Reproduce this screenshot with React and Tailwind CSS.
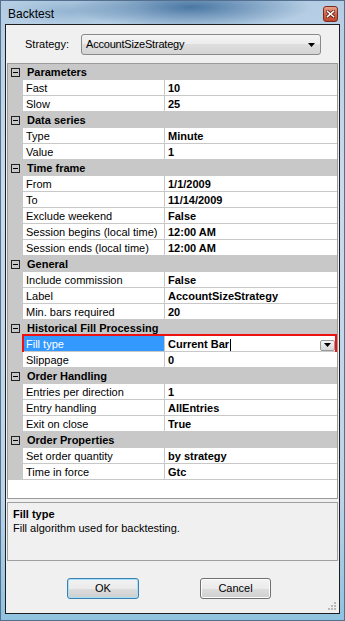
import React from "react";

const sections = [
  { title: "Parameters", rows: [["Fast", "10"], ["Slow", "25"]] },
  { title: "Data series", rows: [["Type", "Minute"], ["Value", "1"]] },
  {
    title: "Time frame",
    rows: [
      ["From", "1/1/2009"],
      ["To", "11/14/2009"],
      ["Exclude weekend", "False"],
      ["Session begins (local time)", "12:00 AM"],
      ["Session ends (local time)", "12:00 AM"],
    ],
  },
  {
    title: "General",
    rows: [
      ["Include commission", "False"],
      ["Label", "AccountSizeStrategy"],
      ["Min. bars required", "20"],
    ],
  },
  {
    title: "Historical Fill Processing",
    rows: [
      ["Fill type", "Current Bar", true],
      ["Slippage", "0"],
    ],
  },
  {
    title: "Order Handling",
    rows: [
      ["Entries per direction", "1"],
      ["Entry handling", "AllEntries"],
      ["Exit on close", "True"],
    ],
  },
  {
    title: "Order Properties",
    rows: [
      ["Set order quantity", "by strategy"],
      ["Time in force", "Gtc"],
    ],
  },
];

function Category({ title }) {
  return (
    <div className="h-[16px] flex items-center bg-[#c8c8c8] pl-[3px] pt-[1px]">
      <div className="w-[9px] h-[9px] border border-[#222] flex items-center justify-center">
        <div className="w-[5px] h-[1px] bg-black" />
      </div>
      <span className="ml-[7px] font-bold leading-none">{title}</span>
    </div>
  );
}

function Row({ name, value, selected }) {
  return (
    <div className="relative h-[16px] flex">
      <div className="w-[15px] bg-[#c8c8c8]" />
      <div
        className={
          selected
            ? "w-[141px] h-[15px] flex items-center pl-[3px] pt-[2px] bg-[#3399ff] text-white"
            : "w-[141px] h-[15px] flex items-center pl-[3px] pt-[2px] bg-white"
        }
      >
        <span className="whitespace-nowrap leading-none">{name}</span>
      </div>
      <div className="w-[1px] bg-[#c8c8c8]" />
      <div className="flex-1 h-[15px] flex items-center pl-[3px] pt-[2px] bg-white">
        <span className="font-bold whitespace-nowrap leading-none">{value}</span>
        {selected && <div className="w-[1px] h-[12px] bg-black ml-[1px]" />}
        {selected && (
          <div className="ml-auto mr-[2px] mt-[1px] w-[15px] h-[11px] border border-[#9a9a9a] rounded-[2px] bg-gradient-to-b from-[#f6f6f6] to-[#d6d6d6] flex items-center justify-center">
            <svg width="7" height="4" viewBox="0 0 7 4">
              <path d="M0 0h7L3.5 4z" fill="#000" />
            </svg>
          </div>
        )}
      </div>
      <div className="absolute left-0 right-0 bottom-0 h-[1px] bg-[#c8c8c8]" />
      {selected && (
        <div className="absolute left-[14px] right-0 -top-[2px] -bottom-[2px] border-2 border-[#ee1111]" />
      )}
    </div>
  );
}

export default function App() {
  return (
    <div className="w-[345px] h-[621px] flex flex-col overflow-hidden border border-[#55708f] font-['Liberation_Sans',Arial,sans-serif] text-[11px] text-black bg-[radial-gradient(ellipse_120px_22px_at_190px_6px,#4a77a3,transparent),radial-gradient(ellipse_70px_14px_at_70px_10px,#94b4d1,transparent),linear-gradient(180deg,#b4cde4,#c8dbec_30%,#bcd3e8_80%,#8fc3df)]">
      {/* title bar */}
      <div className="h-[23px] flex items-center justify-between pl-[7px] pr-[6px]">
        <span className="text-[12px] mt-[2px]">Backtest</span>
        <div className="w-[15px] h-[16px] mt-[3px] rounded-[3px] border border-[#7c2a1c] bg-gradient-to-b from-[#eaa28c] via-[#d2634a] to-[#c0462c] flex items-center justify-center">
          <svg width="9" height="8" viewBox="0 0 9 8">
            <path d="M1.5 1.5l6 5M7.5 1.5l-6 5" stroke="#5a1f14" strokeWidth="3.2" strokeLinecap="square" />
            <path d="M1.5 1.5l6 5M7.5 1.5l-6 5" stroke="#fff" strokeWidth="1.6" strokeLinecap="square" />
          </svg>
        </div>
      </div>

      {/* client area */}
      <div className="flex-1 mx-[4px] mb-[6px] border border-[#1e1e1e] bg-[#f0f0f0] flex flex-col relative">
        <div className="flex items-center mt-[9px] h-[21px]">
          <span className="ml-[19px] w-[56px] text-[11px]">Strategy:</span>
          <div className="w-[240px] h-[21px] rounded-[3px] border border-[#8a8a8a] bg-[linear-gradient(180deg,#f4f4f4_0%,#ececec_50%,#dedede_50%,#d4d4d4_100%)] flex items-center pl-[4px] pr-[5px]">
            <span className="tracking-[-0.2px]">AccountSizeStrategy</span>
            <svg className="ml-auto" width="7" height="4" viewBox="0 0 7 4">
              <path d="M0 0h7L3.5 4z" fill="#000" />
            </svg>
          </div>
        </div>

        {/* property grid */}
        <div className="mt-[8px] mx-[1px] h-[436px] border border-[#9a9a9a] bg-white flex flex-col">
          {sections.map((s) => (
            <div key={s.title}>
              <Category title={s.title} />
              {s.rows.map((r) => (
                <Row key={r[0]} name={r[0]} value={r[1]} selected={r[2]} />
              ))}
            </div>
          ))}
        </div>

        {/* help area */}
        <div className="mt-[3px] mx-[1px] h-[59px] border border-[#a0a0a0] bg-[#f0f0f0] pl-[5px] pt-[4px]">
          <div className="font-bold leading-[14px]">Fill type</div>
          <div className="leading-[15px]">Fill algorithm used for backtesting.</div>
        </div>

        {/* buttons */}
        <div className="flex mt-[17px] pl-[61px] gap-[61px]">
          <div className="w-[72px] h-[21px] rounded-[3px] border border-[#3c7fb1] shadow-[inset_0_0_0_1px_#a6e1f8] bg-[linear-gradient(180deg,#f2f2f2_0%,#ebebeb_50%,#dddddd_50%,#cfcfcf_100%)] flex items-center justify-center">
            OK
          </div>
          <div className="w-[71px] h-[21px] rounded-[3px] border border-[#707070] shadow-[inset_0_0_0_1px_#fcfcfc] bg-[linear-gradient(180deg,#f2f2f2_0%,#ebebeb_50%,#dddddd_50%,#cfcfcf_100%)] flex items-center justify-center">
            Cancel
          </div>
        </div>

        {/* size grip */}
        <svg className="absolute right-[2px] bottom-[2px]" width="10" height="10" viewBox="0 0 10 10">
          <rect x="7" y="1" width="2" height="2" fill="#b8b8b8" />
          <rect x="4" y="4" width="2" height="2" fill="#b8b8b8" />
          <rect x="7" y="4" width="2" height="2" fill="#b8b8b8" />
          <rect x="1" y="7" width="2" height="2" fill="#b8b8b8" />
          <rect x="4" y="7" width="2" height="2" fill="#b8b8b8" />
          <rect x="7" y="7" width="2" height="2" fill="#b8b8b8" />
        </svg>
      </div>
    </div>
  );
}
